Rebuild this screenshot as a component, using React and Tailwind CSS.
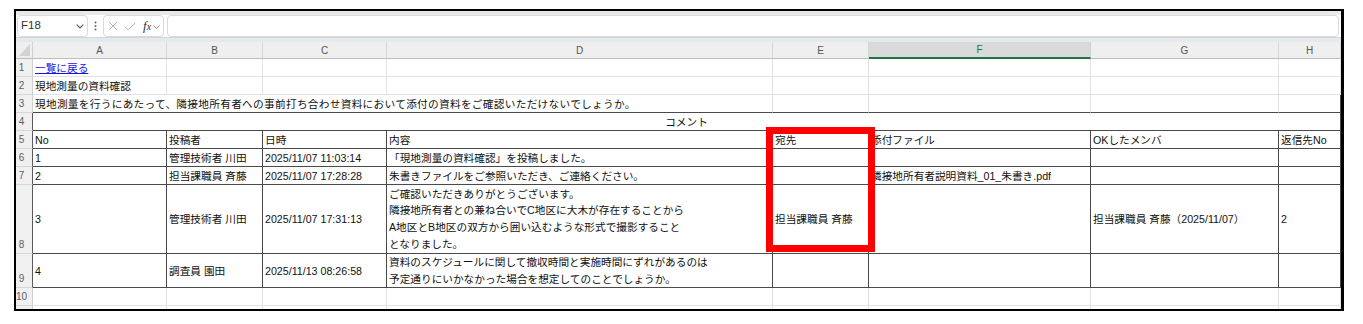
import React from "react";

const GRID = "grid grid-cols-[17px_134px_96px_124px_386px_96px_222px_188px_62px]";

function RowHdr({ n, dark }) {
  return (
    <div
      className={
        dark
          ? "flex items-end bg-[#f0f0f0] border-b border-b-[#d6d6d6] border-r border-r-[#5a5a5a] text-[10px] leading-[16px] text-[#5f5f5f]"
          : "flex items-end bg-[#f0f0f0] border-b border-b-[#d6d6d6] border-r border-r-[#cfcfcf] text-[10px] leading-[16px] text-[#5f5f5f]"
      }
    >
      <span className="w-[11px] flex justify-center">{n}</span>
    </div>
  );
}

function L({ children, className = "" }) {
  return (
    <div className={"flex items-center pl-[2px] border-r border-b border-[#e2e2e2] whitespace-nowrap " + className}>
      {children}
    </div>
  );
}

function D({ children, className = "" }) {
  return (
    <div className={"flex items-center pl-[2px] border-r border-b border-[#4a4a4a] whitespace-nowrap " + className}>
      {children}
    </div>
  );
}

function ColHdr({ label, active }) {
  return active ? (
    <div className="flex items-center justify-center bg-[#dadada] border-r border-r-[#d0d0d0] border-b-2 border-b-[#217346] text-[#217346] text-[10px]">
      {label}
    </div>
  ) : (
    <div className="flex items-center justify-center bg-[#efefef] border-r border-r-[#d6d6d6] border-b border-b-[#bdbdbd] text-[#555] text-[10px]">
      {label}
    </div>
  );
}

export default function App() {
  return (
    <div className="relative w-[1363px] h-[324px] bg-white overflow-hidden font-['Liberation_Sans','Noto_Sans_CJK_JP',sans-serif] text-[10.67px] text-[#111]">
      <div className="ml-[14px] mt-[9px] w-[1330px] h-[302px] border-t-2 border-l-2 border-b-2 border-r-[3px] border-black overflow-hidden">
        {/* top strip */}
        <div className="h-[4px] bg-[#e9e9e9]" />
        {/* formula bar */}
        <div className="h-[22px] flex bg-white">
          <div className="ml-[1px] w-[71px] rounded-[4px] border border-[#dadada] flex items-center justify-between pl-[3px] pr-[3px]">
            <span className="text-[11.5px] text-[#333]">F18</span>
            <svg width="8" height="5" viewBox="0 0 8 5">
              <path d="M0.7 0.7 L4 4 L7.3 0.7" fill="none" stroke="#555" strokeWidth="1.1" />
            </svg>
          </div>
          <div className="w-[15px] flex items-center justify-center">
            <svg width="3" height="10" viewBox="0 0 3 10">
              <circle cx="1.5" cy="1.5" r="1" fill="#666" />
              <circle cx="1.5" cy="5" r="1" fill="#666" />
              <circle cx="1.5" cy="8.5" r="1" fill="#666" />
            </svg>
          </div>
          <div className="w-[61px] rounded-[4px] border border-[#dadada] flex items-center pl-[4px]">
            <svg width="10" height="10" viewBox="0 0 10 10">
              <path d="M1 1 L9 9 M9 1 L1 9" fill="none" stroke="#b4b4b4" strokeWidth="1" />
            </svg>
            <svg className="ml-[6px]" width="12" height="9" viewBox="0 0 12 9">
              <path d="M0.8 4.5 L4.2 8 L11.2 0.8" fill="none" stroke="#b4b4b4" strokeWidth="1" />
            </svg>
            <span className="ml-[7px] italic font-['Liberation_Serif',serif] text-[13px] leading-[13px] text-[#333]">
              f<span className="text-[10px]">x</span>
            </span>
            <svg className="ml-[2px] mt-[2px]" width="7" height="4" viewBox="0 0 7 4">
              <path d="M0.5 0.5 L3.5 3.5 L6.5 0.5" fill="none" stroke="#777" strokeWidth="0.9" />
            </svg>
          </div>
          <div className="ml-[3px] mr-[2px] flex-1 rounded-[4px] border border-[#dadada]" />
        </div>
        <div className="h-[5px] bg-[#e6e9ec] border-t border-[#d3d6d9]" />

        {/* column header */}
        <div className={GRID + " h-[17px]"}>
          <div className="relative bg-[#efefef] border-r border-r-[#d0d0d0] border-b border-b-[#bdbdbd]">
            <svg className="absolute left-0 top-0" width="17" height="16" viewBox="0 0 17 16">
              <polygon points="14,2 14,14 3,14" fill="#d2d2d2" />
            </svg>
          </div>
          <ColHdr label="A" />
          <ColHdr label="B" />
          <ColHdr label="C" />
          <ColHdr label="D" />
          <ColHdr label="E" />
          <ColHdr label="F" active />
          <ColHdr label="G" />
          <ColHdr label="H" />
        </div>

        {/* row 1 */}
        <div className={GRID + " h-[18px]"}>
          <RowHdr n="1" />
          <L>
            <span className="text-[#1515e6] underline underline-offset-[1px]">一覧に戻る</span>
          </L>
          <L /><L /><L /><L /><L /><L /><L />
        </div>
        {/* row 2 */}
        <div className={GRID + " h-[18px]"}>
          <RowHdr n="2" />
          <L>現地測量の資料確認</L>
          <L /><L /><L /><L /><L /><L /><L />
        </div>
        {/* row 3 */}
        <div className={GRID + " h-[18px]"}>
          <RowHdr n="3" />
          <div className="col-span-4 flex items-center pl-[2px] border-r border-r-[#e2e2e2] border-b border-b-[#4a4a4a] whitespace-nowrap tracking-[0.3px]">
            現地測量を行うにあたって、隣接地所有者への事前打ち合わせ資料において添付の資料をご確認いただけないでしょうか。
          </div>
          <div className="border-r border-r-[#e2e2e2] border-b border-b-[#4a4a4a]" />
          <div className="border-r border-r-[#e2e2e2] border-b border-b-[#4a4a4a]" />
          <div className="border-r border-r-[#e2e2e2] border-b border-b-[#4a4a4a]" />
          <div className="border-r border-r-[#4a4a4a] border-b border-b-[#4a4a4a]" />
        </div>
        {/* row 4 */}
        <div className={GRID + " h-[18px]"}>
          <RowHdr n="4" dark />
          <div className="col-span-8 flex items-center justify-center border-r border-b border-[#4a4a4a]">
            コメント
          </div>
        </div>
        {/* row 5 */}
        <div className={GRID + " h-[18px]"}>
          <RowHdr n="5" dark />
          <D>No</D>
          <D>投稿者</D>
          <D>日時</D>
          <D>内容</D>
          <D>宛先</D>
          <D>添付ファイル</D>
          <D>OKしたメンバ</D>
          <D>返信先No</D>
        </div>
        {/* row 6 */}
        <div className={GRID + " h-[18px]"}>
          <RowHdr n="6" dark />
          <D>1</D>
          <D>管理技術者 川田</D>
          <D>2025/11/07 11:03:14</D>
          <D>「現地測量の資料確認」を投稿しました。</D>
          <D />
          <D />
          <D />
          <D />
        </div>
        {/* row 7 */}
        <div className={GRID + " h-[18px]"}>
          <RowHdr n="7" dark />
          <D>2</D>
          <D>担当課職員 斉藤</D>
          <D>2025/11/07 17:28:28</D>
          <D>朱書きファイルをご参照いただき、ご連絡ください。</D>
          <D />
          <D>隣接地所有者説明資料_01_朱書き.pdf</D>
          <D />
          <D />
        </div>
        {/* row 8 */}
        <div className={GRID + " h-[69px]"}>
          <RowHdr n="8" dark />
          <D>3</D>
          <D>管理技術者 川田</D>
          <D>2025/11/07 17:31:13</D>
          <D>
            <div className="flex flex-col leading-[16.6px]">
              <span>ご確認いただきありがとうございます。</span>
              <span>隣接地所有者との兼ね合いでC地区に大木が存在することから</span>
              <span>A地区とB地区の双方から囲い込むような形式で撮影すること</span>
              <span>となりました。</span>
            </div>
          </D>
          <D>担当課職員 斉藤</D>
          <D />
          <D>担当課職員 斉藤（2025/11/07）</D>
          <D>2</D>
        </div>
        {/* row 9 */}
        <div className={GRID + " h-[34px]"}>
          <RowHdr n="9" dark />
          <D>4</D>
          <D>調査員 園田</D>
          <D>2025/11/13 08:26:58</D>
          <D>
            <div className="flex flex-col leading-[16.6px]">
              <span>資料のスケジュールに関して撤収時間と実施時間にずれがあるのは</span>
              <span>予定通りにいかなかった場合を想定してのことでしょうか。</span>
            </div>
          </D>
          <D />
          <D />
          <D />
          <D />
        </div>
        {/* row 10 */}
        <div className={GRID + " h-[18px]"}>
          <RowHdr n="10" />
          <L /><L /><L /><L /><L /><L /><L /><L />
        </div>
        {/* row 11 (partial) */}
        <div className={GRID + " h-[18px]"}>
          <div className="bg-[#f0f0f0] border-r border-r-[#cfcfcf]" />
          <L /><L /><L /><L /><L /><L /><L /><L />
        </div>
      </div>

      {/* red highlight box */}
      <div className="absolute left-[766px] top-[127px] w-[109px] h-[125px] border-[7px] border-[#ff0000]" />
    </div>
  );
}
